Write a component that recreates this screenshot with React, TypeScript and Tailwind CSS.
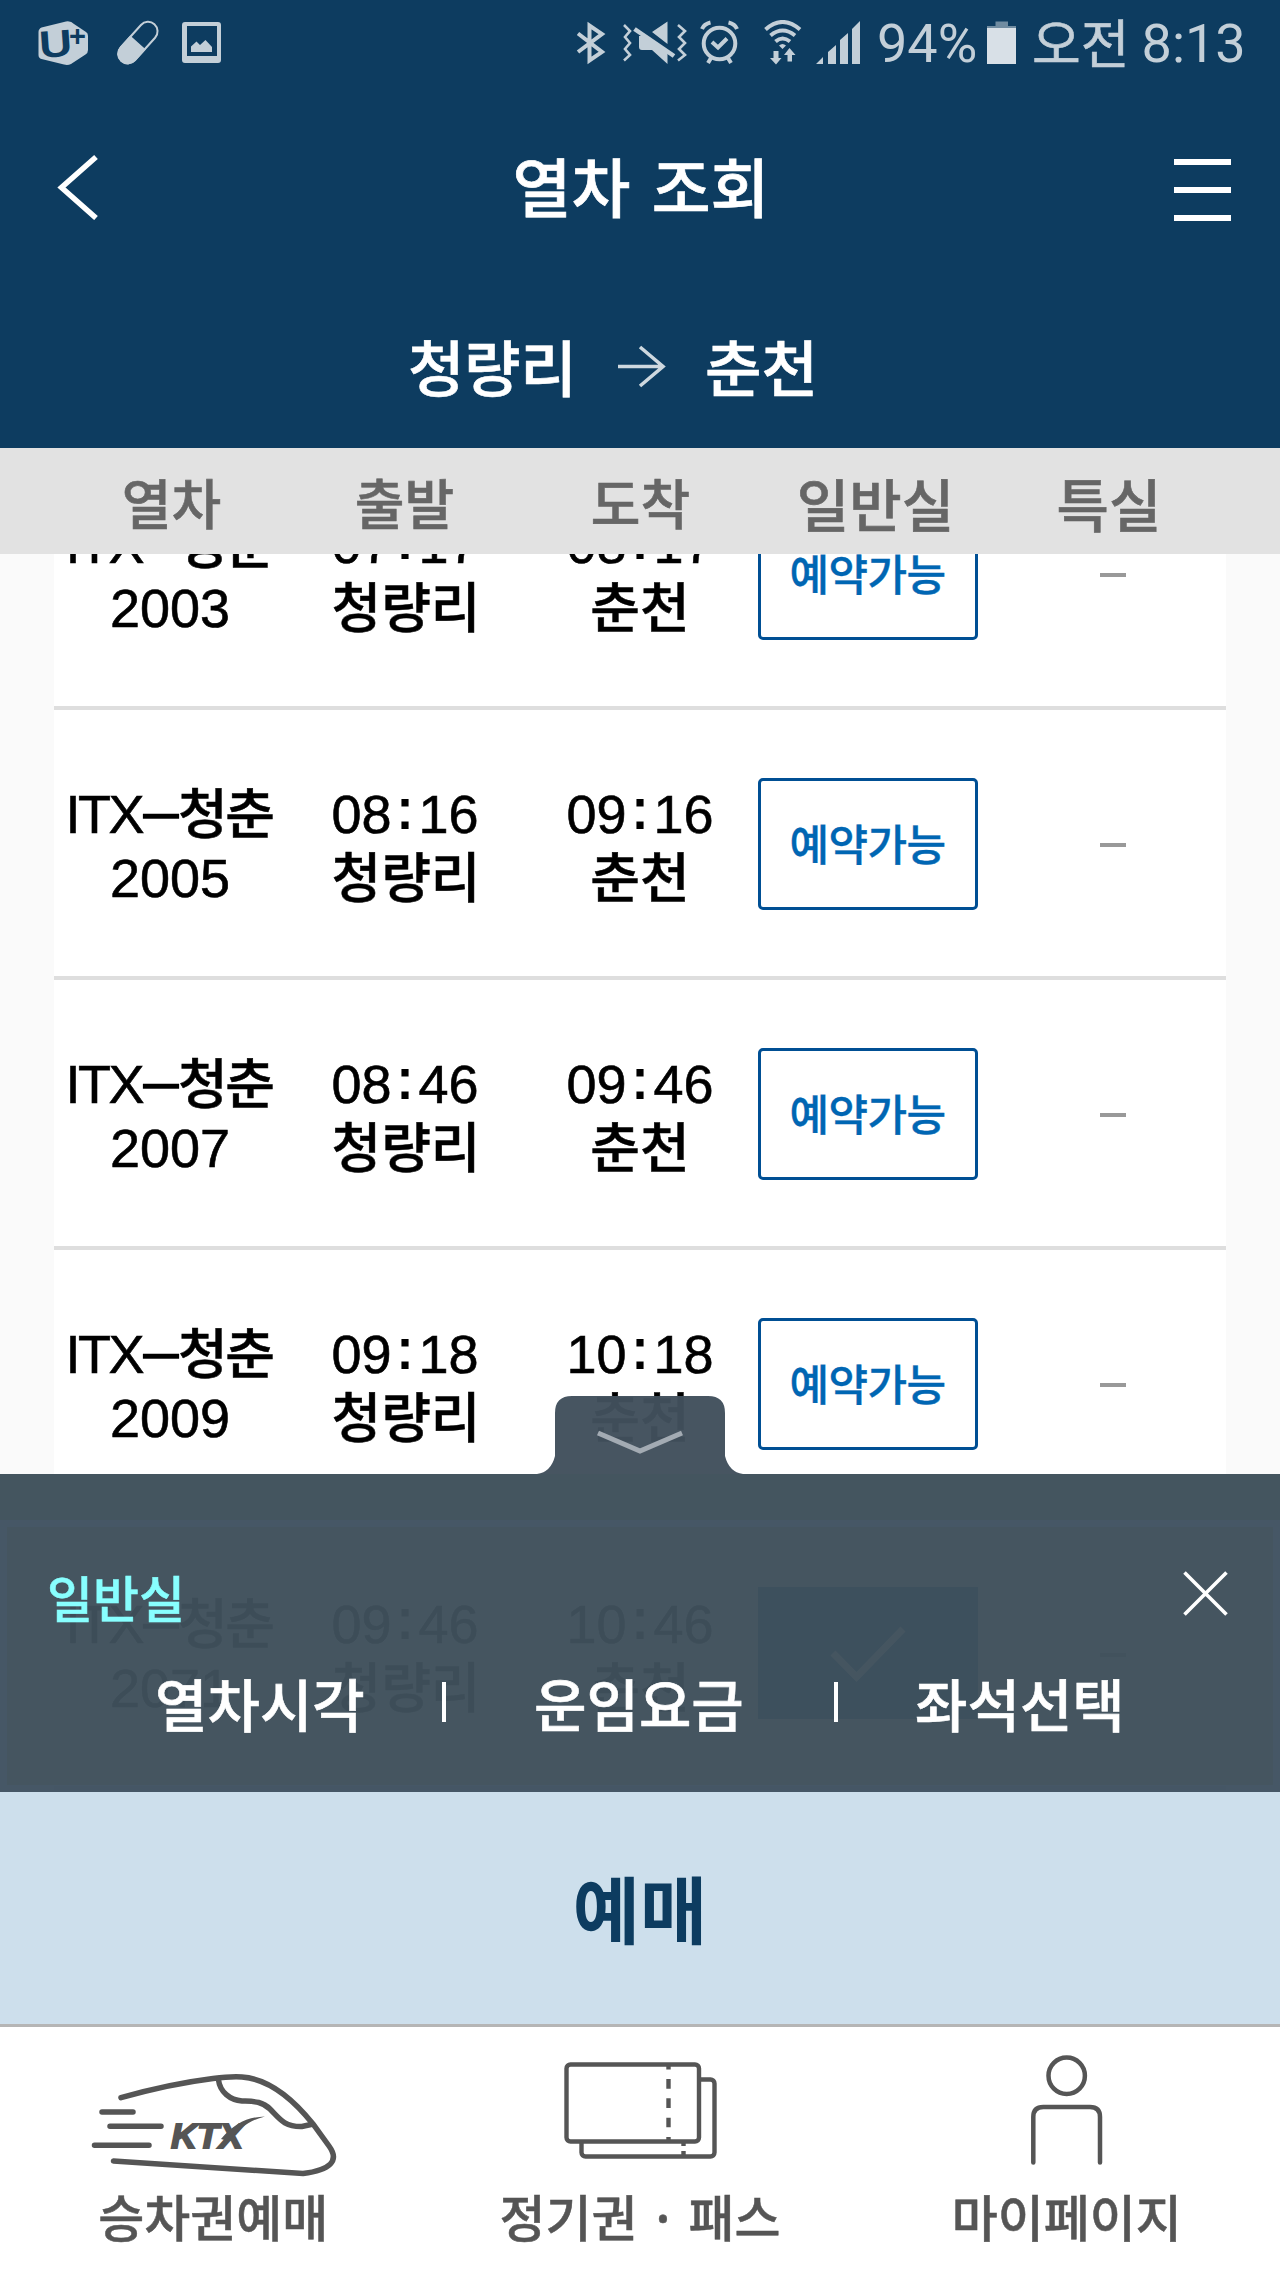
import type { ReactNode } from "react";

type Train = {
  no: string;
  depart: string;
  arrive: string;
  selected?: boolean;
};

const FROM = "청량리";
const TO = "춘천";

const trains: Train[] = [
  { no: "2003", depart: "07:17", arrive: "08:17" },
  { no: "2005", depart: "08:16", arrive: "09:16" },
  { no: "2007", depart: "08:46", arrive: "09:46" },
  { no: "2009", depart: "09:18", arrive: "10:18" },
  { no: "2071", depart: "09:46", arrive: "10:46", selected: true },
];

function StatusBar() {
  return (
    <div className="flex h-[88px] items-start pl-[38px] pt-5 text-[#c3cfd8]">
      <svg className="h-[46px] w-[50px]" viewBox="38 20 50 46" fill="currentColor">
        <path d="M38.500 32Q38.500 29 41.500 27.500L66 21.400Q71 20.600 74 24L86 32Q88 33 88 36V50Q88 53 85.500 54.500L71 64Q68 65.500 64 64.600L41.500 59Q38.500 58 38.500 55Z" />
        <text x="39" y="57" fontSize="38" fontWeight="700" fontFamily="Liberation Sans" fill="#0d3c60" textLength="33" lengthAdjust="spacingAndGlyphs" transform="rotate(-4 55 44)">U</text>
        <text x="69" y="46" fontSize="29" fontWeight="700" fontFamily="Liberation Sans" fill="#0d3c60">+</text>
      </svg>
      <svg className="ml-[28px] h-[46px] w-[44px]" viewBox="116 20 44 46">
        <g transform="rotate(-48 138 42.500)">
          <rect x="113.500" y="33" width="49" height="19" rx="9.500" fill="none" stroke="currentColor" strokeWidth="2" />
          <path d="M138 32H122.500a10.500 10.500 0 0 0 0 21H138Z" fill="currentColor" />
        </g>
      </svg>
      <svg className="ml-[22px] h-[46px] w-[39px]" viewBox="182 20 39 46" fill="currentColor">
        <path fillRule="evenodd" d="M185 22H218Q221 22 221 25V60Q221 63 218 63H185Q182 63 182 60V25Q182 22 185 22ZM187 26V56H217V26Z" />
        <path d="M191 52V46.500L196.500 41.500L200 45L205.500 40L212 47V52Z" />
      </svg>

      <svg className="ml-[355px] h-[46px] w-[30px]" viewBox="576 20 30 46" fill="none" stroke="currentColor" strokeWidth="4">
        <path d="M578 33.500L602 52L589.500 60.500V25.500L602 34L578 52" />
      </svg>
      <svg className="ml-[15px] h-[46px] w-[66px]" viewBox="621 20 66 46">
        <path d="M624 25L630 31L625 37L630 43L625 49L630 55L624 60.500M678 25L685 31L679 37L685 43L679 49L685 55L678 60.500" fill="none" stroke="currentColor" strokeWidth="2.600" />
        <path d="M652 32L667.500 21.500V44ZM639 36H645L667.500 51V64L652 50H642Q639 50 639 47Z" fill="currentColor" />
        <path d="M634.500 29L674 56" stroke="currentColor" strokeWidth="4.500" />
      </svg>
      <svg className="ml-[13px] h-[46px] w-[40px]" viewBox="700 20 40 46" fill="none" stroke="currentColor" strokeWidth="4">
        <circle cx="719.500" cy="43.500" r="15.800" />
        <path d="M712 42L718 47.500L727 38.500M702 29Q704 24 710.500 22.500M737 29Q735 24 728.500 22.500M711 58L708 63M728 58L731 63" />
      </svg>
      <svg className="ml-6 h-[46px] w-[38px]" viewBox="764 20 38 46">
        <path d="M765.500 29.500Q782.500 14.500 800 29.500M770.500 35.500Q782.500 25.500 795 35.500M775.500 41.500Q782.500 35.500 790 41.500" fill="none" stroke="currentColor" strokeWidth="4" />
        <path d="M779 45.500Q782.500 42.500 786 45.500L782.500 49ZM773.500 51H778.500V58H781.500L776 64.500L770 58H773.500ZM787.500 61.500V55H784L789.500 48L795.500 55H792V61.500Z" fill="currentColor" />
      </svg>
      <svg className="ml-[14px] h-[46px] w-[45px]" viewBox="816 20 45 46" fill="currentColor">
        <path d="M816 64L823 57V64ZM828 64V52L836 45V64ZM840 64V40L848 33V64ZM852 64V29L860 21V64Z" />
      </svg>
      <span className="ml-[16px] -mt-[7px] w-[104px] font-[Roboto] text-[54px] leading-[62px]">94%</span>
      <svg className="ml-[6px] h-[46px] w-[29px]" viewBox="987 20 29 46">
        <path d="M987 28V26H995.500V21.500H1008V26H1016V28Z" fill="#708ca1" />
        <path d="M987 28H1016V64H987Z" fill="#d8e0e7" />
      </svg>
      <span className="ml-[16px] -mt-[10px] text-[53px] leading-[62px] font-normal [-webkit-text-stroke:0.6px]">오전</span>
      <span className="ml-[12px] -mt-[7px] font-[Roboto] text-[54px] leading-[62px]">8:13</span>
    </div>
  );
}

function Header() {
  return (
    <header className="h-[448px] bg-[#0d3c60] text-white">
      <StatusBar />
      <div className="flex h-[197px] items-center justify-between pl-[57px] pr-[49px]">
        <svg className="h-[66px] w-[42px]" viewBox="57 153 42 66" fill="none" stroke="currentColor" strokeWidth="5.500">
          <path d="M96 156L61.500 186.500L96 217" />
        </svg>
        <h1 className="-mt-[5px] pl-[9px] text-[64px] font-medium leading-[72px] [-webkit-text-stroke:0.7px] [word-spacing:7px]">
          열차 조회
        </h1>
        <div className="flex w-[57px] flex-col gap-[22px] pt-[7px]">
          <span className="h-1.5 bg-white" />
          <span className="h-1.5 bg-white" />
          <span className="h-1.5 bg-white" />
        </div>
      </div>
      <div className="flex h-[161px] items-center pl-[408px] text-[61.500px] font-medium leading-[72px] [-webkit-text-stroke:0.6px]">
        <span className="w-[166px] whitespace-nowrap tracking-[-0.5px]">{FROM}</span>
        <svg className="ml-[42px] mt-[2px] h-[46px] w-[50px]" viewBox="617 344 50 46" fill="none" stroke="#ced8df" strokeWidth="3.600">
          <path d="M619 366.500H664M641 347L664 366.500L641 386" />
        </svg>
        <span className="ml-[39px] whitespace-nowrap">{TO}</span>
      </div>
    </header>
  );
}

function ColumnHeads() {
  return (
    <div className="grid h-[106px] grid-cols-[237px_229px_243px_227px_240px] items-center bg-[#e2e2e2] pl-[53px] pt-[1px] text-center text-[54px] font-medium leading-[60px] text-[#666] [-webkit-text-stroke:0.6px]">
      <span>열차</span>
      <span>출발</span>
      <span>도착</span>
      <span className="text-[57px]">일반실</span>
      <span className="text-[57px]">특실</span>
    </div>
  );
}

function Time({ value }: { value: string }) {
  const [h, m] = value.split(":");
  return (
    <div className="-translate-y-[1.500px] pl-[1px] [-webkit-text-stroke:0.6px]">
      {h}
      <span className="inline-block w-[27px] -translate-y-[5px] [-webkit-text-stroke:2px]">:</span>
      {m}
    </div>
  );
}

function TrainRow({ train }: { train: Train }) {
  return (
    <div className="grid h-[270px] grid-cols-[232px_237px_233px_223px_247px] items-center border-b-[4px] border-[#dedede] text-center font-['Liberation_Sans','Noto_Sans_CJK_KR',sans-serif] text-[54px] font-medium leading-[64px] text-black">
      <div className="pt-[8px]">
        <div className="whitespace-nowrap pr-[2px]">
          <span className="inline-block -translate-y-[1.500px] tracking-[-2.500px] [-webkit-text-stroke:0.6px]">ITX</span>
          <span className="ml-[4px] mr-[2px] inline-block -translate-y-[4px] scale-x-[1.150] [-webkit-text-stroke:1.500px]">–</span>
          <span className="tracking-[-2.500px] [-webkit-text-stroke:0.5px]">청춘</span>
        </div>
        <div className="-translate-y-[1.500px] [-webkit-text-stroke:0.6px]">{train.no}</div>
      </div>
      <div className="pt-[8px]">
        <Time value={train.depart} />
        <div className="pl-[3px] [-webkit-text-stroke:0.5px]">{FROM}</div>
      </div>
      <div className="pt-[8px]">
        <Time value={train.arrive} />
        <div className="pl-[1px] [-webkit-text-stroke:0.5px]">{TO}</div>
      </div>
      {train.selected ? (
        <div className="mx-auto flex h-[132px] w-[220px] items-center justify-center bg-[#005f96]">
          <svg className="h-[60px] w-[80px]" viewBox="830 1622 80 60" fill="none" stroke="#fff" strokeWidth="7">
            <path d="M835 1652L858.500 1676L905 1628" />
          </svg>
        </div>
      ) : (
        <button
          type="button"
          className="mx-auto mt-[1px] flex h-[132px] w-[220px] items-center justify-center rounded-[5px] border-[3px] border-[#004f94] pb-[3px] font-['Noto_Sans_CJK_KR',sans-serif] text-[43px] leading-[50px] tracking-[-0.5px] text-[#0066b3] [-webkit-text-stroke:0.4px]"
        >
          예약가능
        </button>
      )}
      <div className="flex justify-center pl-5 pt-[3px]">
        <span className="h-1 w-[26px] bg-[#999]" />
      </div>
    </div>
  );
}

function SeatPanel() {
  return (
    <div className="absolute inset-x-0 bottom-0">
      <div className="flex justify-center">
        <svg className="h-[78px] w-[206px]" viewBox="537 1396 206 78">
          <path d="M537 1474Q551 1472 555 1456V1413Q555 1396 572 1396H708Q725 1396 725 1413V1456Q729 1472 743 1474Z" fill="#414f5c" fillOpacity="0.970" />
          <path d="M598 1433L640 1451L682 1433" fill="none" stroke="#a3abb3" strokeWidth="5" />
        </svg>
      </div>
      <div className="h-[46px] bg-[#44555f]" />
      <div className="h-[272px] border-[7px] border-[#405261]/97 bg-[#3f4f5b]/97 bg-clip-padding px-[41px] pt-[41px] text-white">
        <div className="flex h-[56px] items-center justify-between">
          <span className="-ml-[1px] text-[50px] font-medium leading-[56px] text-[#8ff] [-webkit-text-stroke:0.5px]">일반실</span>
          <svg className="mb-[7px] mr-[4px] h-[46px] w-[46px]" viewBox="1182 1570 46 46" fill="none" stroke="currentColor" strokeWidth="3.600">
            <path d="M1184.500 1572.500L1226.500 1614.500M1226.500 1572.500L1184.500 1614.500" />
          </svg>
        </div>
        <div className="mt-[45px] flex h-[66px] items-center pl-[107px] text-[57px] font-medium leading-[66px] [-webkit-text-stroke:0.6px]">
          <span className="w-[211px] whitespace-nowrap">열차시각</span>
          <span className="ml-[76px] h-10 w-1 bg-white" />
          <span className="ml-[88px] w-[210px] whitespace-nowrap">운임요금</span>
          <span className="ml-[90px] h-10 w-1 bg-white" />
          <span className="ml-[77px] whitespace-nowrap">좌석선택</span>
        </div>
      </div>
    </div>
  );
}

function TrainIcon() {
  return (
    <svg className="h-[126px] w-[250px]" viewBox="88 2052 250 126" fill="none" stroke="currentColor" strokeWidth="5.500" strokeLinecap="round">
      <path d="M121 2097.700C155 2088 185 2082 213 2078.500C225 2077 234 2076.500 242 2077C270 2079 293 2099 313 2124L329 2146C340 2161 330 2170 303 2173.500L113.500 2161" />
      <path d="M218.500 2080C220 2092 230 2100 242 2101C254 2101.500 262 2101 270 2109C279 2118 284 2127 302 2126.500L311 2124.500" />
      <path d="M102 2112H133M110 2126.300H161M94.500 2145.300H149" />
      <text x="171" y="2147.500" fill="currentColor" stroke="currentColor" strokeWidth="1.800" fontFamily="Liberation Sans" fontWeight="700" fontStyle="italic" fontSize="35" textLength="72" lengthAdjust="spacingAndGlyphs">KTX</text>
      <path d="M221 2139C234 2124 247 2117 265 2116.500C250 2120 240 2128 228 2141Z" fill="currentColor" stroke="none" />
    </svg>
  );
}

function TicketIcon() {
  return (
    <svg className="h-[126px] w-[156px]" viewBox="562.500 2052 156 126" fill="none" stroke="currentColor" strokeWidth="4.400">
      <rect x="582" y="2079.500" width="133" height="77" rx="4" />
      <rect x="567" y="2064.500" width="132.500" height="77" rx="4" fill="#fff" />
      <path d="M669 2066V2069.500M669 2079V2088.700M669 2098.300V2108M669 2117.700V2127.300M669 2137V2140M684 2143V2146M684 2151V2155" />
    </svg>
  );
}

function PersonIcon() {
  return (
    <svg className="h-[126px] w-[76px]" viewBox="1029 2052 76 126" fill="none" stroke="currentColor" strokeWidth="4.500" strokeLinecap="round">
      <circle cx="1066.700" cy="2075.700" r="18.200" />
      <path d="M1033.300 2162.500V2117Q1033.300 2107 1043.300 2107H1090Q1100 2107 1100 2117V2162.500" />
    </svg>
  );
}

function NavItem({ icon, label }: { icon: ReactNode; label: string }) {
  return (
    <div className="flex w-[427px] flex-col items-center pt-[25px]">
      {icon}
      <span className="mt-[7px] whitespace-nowrap text-[50px] font-medium leading-[60px] [-webkit-text-stroke:0.5px]">{label}</span>
    </div>
  );
}

export default function App() {
  return (
    <div className="flex h-[2275px] w-[1280px] flex-col overflow-hidden bg-white font-['Noto_Sans_CJK_KR',sans-serif]">
      <Header />
      <ColumnHeads />
      <div className="relative h-[1238px] overflow-hidden bg-[#fafafa] px-[54px]">
        <div className="-mt-[114px] bg-white">
          {trains.map((t) => (
            <TrainRow key={t.no} train={t} />
          ))}
        </div>
        <SeatPanel />
      </div>
      <button type="button" className="h-[235px] border-b-[3px] border-[#b5b5b5] bg-[#cddfec] pb-[4px] text-[73px] font-bold leading-[80px] text-[#0d3c60]">
        예매
      </button>
      <nav className="flex h-[248px] justify-between text-[#555]">
        <NavItem icon={<TrainIcon />} label="승차권예매" />
        <NavItem icon={<TicketIcon />} label="정기권 · 패스" />
        <NavItem icon={<PersonIcon />} label="마이페이지" />
      </nav>
    </div>
  );
}
